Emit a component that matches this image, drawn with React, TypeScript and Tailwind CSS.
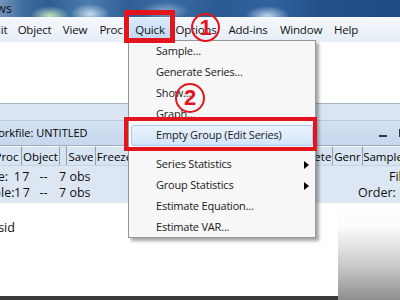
import React from "react";

const Arrow = () => (
  <svg className="absolute right-[6px] top-[7px]" width="5" height="8" viewBox="0 0 5 8">
    <path d="M0 0 L5 4 L0 8 Z" fill="#000" />
  </svg>
);

function MenuItem({ label, arrow }: { label: string; arrow?: boolean }) {
  return (
    <div className="relative h-[21px] flex items-center pl-[27px] text-[11px] tracking-[-0.2px] text-[#1a1a1a] whitespace-nowrap">
      {label}
      {arrow && <Arrow />}
    </div>
  );
}

function TBtn({ label, w }: { label: string; w: number }) {
  return (
    <div
      className="h-[20px] shrink-0 flex items-center justify-center border-r border-[#8fa0b5] border-t border-t-[#f4f8fc] text-[11.5px] text-black whitespace-nowrap overflow-hidden"
      style={{ width: w }}
    >
      {label}
    </div>
  );
}

export default function App() {
  return (
    <div className="relative w-[400px] h-[300px] overflow-hidden bg-white flex flex-col font-['Open_Sans','Noto_Sans',sans-serif]">
      {/* window title bar */}
      <div className="relative h-[17px] shrink-0 overflow-hidden bg-[linear-gradient(to_right,#7596bc_0%,#3f6c9e_6%,#2d5d93_12%,#4b7cab_22%,#2f5f96_32%,#3b6ca2_42%,#2a5a92_55%,#2f63a0_68%,#244f8a_80%,#1f4a86_100%)]">
        <div className="absolute left-[30px] top-[6px] w-[40px] h-[20px] rounded-full bg-[radial-gradient(ellipse_at_center,rgba(200,235,190,0.95),rgba(160,210,170,0)_70%)]" />
        <div className="absolute left-[70px] top-[4px] w-[40px] h-[20px] rounded-full bg-[radial-gradient(ellipse_at_center,rgba(230,240,250,0.8),rgba(200,220,240,0)_70%)]" />
        <div className="absolute left-[140px] top-[2px] w-[50px] h-[18px] rounded-full bg-[radial-gradient(ellipse_at_center,rgba(180,205,230,0.6),rgba(180,205,230,0)_70%)]" />
        <div className="absolute left-[245px] top-[6px] w-[45px] h-[20px] rounded-full bg-[radial-gradient(ellipse_at_center,rgba(215,230,245,0.85),rgba(200,220,240,0)_70%)]" />
        <div className="relative ml-[-27px] h-full flex items-center text-[12px] text-[#1b1b1b] font-['Noto_Sans',sans-serif]">
          EViews
        </div>
      </div>

      {/* menu bar */}
      <div className="h-[25px] shrink-0 flex items-center bg-[linear-gradient(to_bottom,#f5f8fc,#e6edf6)] text-[11.5px] tracking-[-0.2px] text-[#111] whitespace-nowrap">
        <div className="shrink-0 w-[31px] ml-[-18px] text-center">Edit</div>
        <div className="shrink-0 w-[43px] text-center">Object</div>
        <div className="shrink-0 w-[38px] text-center">View</div>
        <div className="shrink-0 w-[34px] text-center">Proc</div>
        <div className="shrink-0 w-[40px] ml-[2px] h-[23px] flex items-center justify-center bg-[linear-gradient(to_bottom,#dcebfb,#bcd5f1)]">Quick</div>
        <div className="shrink-0 w-[52px] text-center">Options</div>
        <div className="shrink-0 w-[52px] text-center">Add-ins</div>
        <div className="shrink-0 w-[54px] text-center">Window</div>
        <div className="shrink-0 w-[36px] text-center">Help</div>
      </div>

      {/* empty white area */}
      <div className="h-[61px] shrink-0 bg-white" />

      {/* MDI band */}
      <div className="h-[17px] shrink-0 border-t border-[#a8b4c2] bg-[#dae5f2]" />

      {/* workfile window title */}
      <div className="h-[25px] shrink-0 flex items-center justify-between border-t border-[#b9c9dc] bg-[linear-gradient(to_bottom,#d3e1f2,#c6d7ec)]">
        <div className="ml-[-12px] text-[11px] text-black whitespace-nowrap">Workfile: UNTITLED</div>
        <div className="flex items-center gap-[12px] mr-[-8px]">
          <div className="w-[8px] h-[2px] bg-[#333] mt-[6px]" />
          <div className="w-[9px] h-[8px] border border-[#333] border-t-2" />
        </div>
      </div>

      {/* toolbar */}
      <div className="h-[20px] shrink-0 flex bg-[#d9e4f1] border-t border-[#9fb0c4] overflow-hidden">
        <div className="flex ml-[-8px]">
          <TBtn label="Proc" w={30} />
          <TBtn label="Object" w={38} />
          <div className="w-[7px] shrink-0 border-r border-[#8fa0b5]" />
          <TBtn label="Save" w={29} />
          <TBtn label="Freeze" w={38} />
          <TBtn label="Details+/-" w={62} />
          <TBtn label="Show" w={32} />
          <TBtn label="Fetch" w={34} />
          <TBtn label="Store" w={34} />
          <TBtn label="Delete" w={37} />
          <TBtn label="Genr" w={30} />
          <TBtn label="Sample" w={41} />
        </div>
      </div>

      {/* info area */}
      <div className="h-[38px] shrink-0 bg-[#dde7f3] border-t border-[#c5d3e4] text-[12.5px] text-[#111] overflow-hidden whitespace-nowrap pt-[3px]">
        <div className="flex h-[16px] items-center">
          <div className="shrink-0 w-[389px] flex">
            <span className="ml-[-45px] w-[53px] text-right">Range:</span>
            <span className="w-[23px] text-right tracking-[1.5px]">17</span>
            <span className="w-[25px] text-center">--</span>
            <span className="ml-[3px]">7 obs</span>
          </div>
          <span className="shrink-0">Filter: *</span>
        </div>
        <div className="flex h-[16px] items-center">
          <div className="shrink-0 w-[358px] flex">
            <span className="ml-[-32px] w-[46px] shrink-0">Sample:</span>
            <span className="w-[17px] shrink-0 tracking-[1.5px]">17</span>
            <span className="w-[25px] shrink-0 text-center">--</span>
            <span className="ml-[3px]">7 obs</span>
          </div>
          <span className="shrink-0">Order: Name</span>
        </div>
      </div>

      {/* body */}
      <div className="flex-1 flex min-h-0">
        <div className="flex-1 flex flex-col">
          <div className="flex-1 bg-white pt-[16px]">
            <div className="h-[18px] flex items-center ml-[-14px] text-[12.5px] text-[#111]">resid</div>
          </div>
          <div className="h-[4px] bg-[#3a3a3a]" />
        </div>
        <div className="w-[62px] shrink-0 bg-[linear-gradient(to_bottom,#ffffff_0%,#fbfbfb_25%,#c9c9c9_65%,#8e8e8e_100%)]" />
      </div>

      {/* dropdown menu */}
      <div className="absolute left-[128px] top-[40px] w-[188px] h-[198px] border border-[#979797] bg-[#f7f7f7] shadow-[3px_3px_3px_rgba(0,0,0,0.35)]">
        <MenuItem label="Sample..." />
        <MenuItem label="Generate Series..." />
        <MenuItem label="Show..." />
        <MenuItem label="Graph..." />
        <div className="h-[21px] mx-[2px] flex items-center pl-[24px] rounded-[3px] border border-[#a9cbf3] bg-[linear-gradient(to_bottom,#eaf3fd,#d3e5fa)] text-[11px] tracking-[-0.2px] text-[#1a1a1a] whitespace-nowrap">
          Empty Group (Edit Series)
        </div>
        <div className="h-[8px] flex items-center pl-[27px] pr-[2px]">
          <div className="flex-1 h-px bg-[#e2e2e2]" />
        </div>
        <MenuItem label="Series Statistics" arrow />
        <MenuItem label="Group Statistics" arrow />
        <MenuItem label="Estimate Equation..." />
        <MenuItem label="Estimate VAR..." />
      </div>

      {/* red annotation boxes */}
      <div className="absolute left-[124px] top-[10px] w-[51px] h-[33px] border-[5px] border-[#e3141c]" />
      <div className="absolute left-[124px] top-[117px] w-[193px] h-[34px] border-[4px] border-[#e3141c]" />

      {/* circled numbers */}
      <div className="absolute left-[191px] top-[13px] w-[29px] h-[29px] rounded-full border-2 border-[#e3141c] flex items-center justify-center text-[22px] leading-none font-bold text-[#e3141c] font-['Liberation_Sans',sans-serif]">
        1
      </div>
      <div className="absolute left-[175px] top-[83px] w-[30px] h-[30px] rounded-full border-2 border-[#e3141c] flex items-center justify-center text-[22px] leading-none font-bold text-[#e3141c] font-['Liberation_Sans',sans-serif]">
        2
      </div>
    </div>
  );
}
